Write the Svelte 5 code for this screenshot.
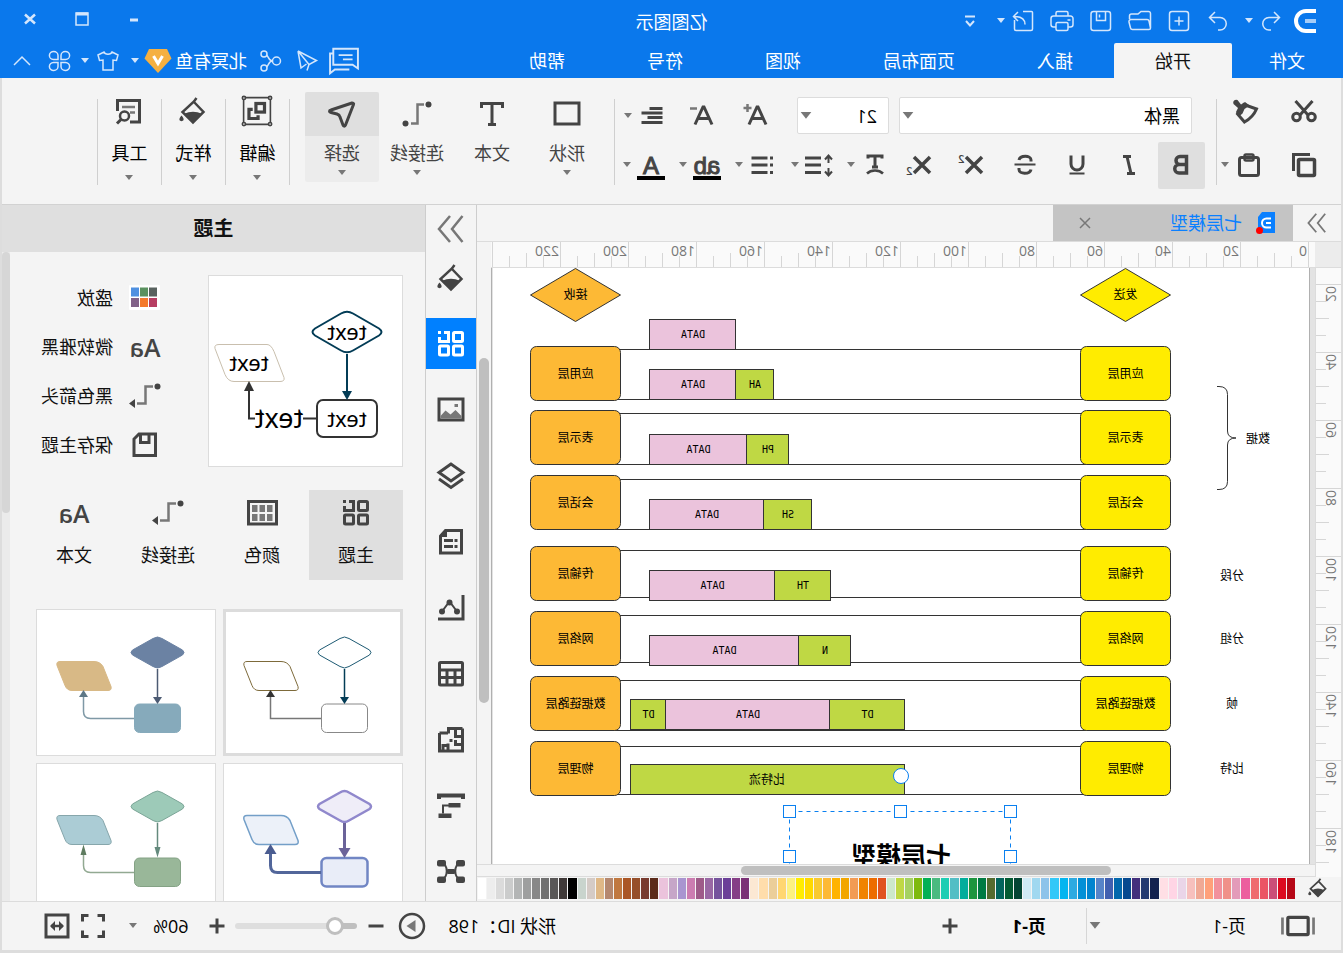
<script lang="ts">
  // Diagram editor window. The whole window is drawn flipped left to right,
  // so everything below is laid out in normal reading order and the root
  // element is mirrored once.

  let tab = $state("开始");
  let font = $state("黑体");
  let size = $state("21");
  let bold = $state(true);
  let tool = $state("选择");
  let rail = $state(1);
  let themeTab = $state("主题");
  let theme = $state(0);
  let page = $state("页-1");
  let zoom = $state(60);

  const tabs = ["开始", "插入", "页面布局", "视图", "符号", "帮助"];

  // 28x28 line icons
  const icons: Record<string, string> = {
    undo: '<path d="M11 5 5.5 10.5 11 16M5.5 10.5H16a6 6 0 0 1 0 12.5h-2"/>',
    redo: '<path d="M17 5l5.5 5.5L17 16M22.5 10.5H12a6 6 0 0 0 0 12.5h2"/>',
    create: '<rect x="4.5" y="4.5" width="19" height="19" rx="2.5"/><path d="M14 9.5v9M9.5 14h9"/>',
    folder: '<path d="M3.5 21V6.5a2 2 0 0 1 2-2H13l3 2.5h6.5a2 2 0 0 1 2 2V12M3.5 21l1.5-7a2 2 0 0 1 2-1.5h16a2 2 0 0 1 2 2.5l-1.5 6a2 2 0 0 1-2 1.5H5A1.5 1.5 0 0 1 3.5 21z"/>',
    save: '<rect x="4.5" y="4.5" width="19.5" height="19" rx="2.5"/><path d="M9.5 5v8.5h9V5M15.5 7.5v3"/>',
    print: '<path d="M8 9V6a1.5 1.5 0 0 1 1.5-1.5h9A1.5 1.5 0 0 1 20 6v3M8 20H5.5A2.5 2.5 0 0 1 3 17.5v-6A2.5 2.5 0 0 1 5.5 9h17a2.5 2.5 0 0 1 2.5 2.5v6a2.5 2.5 0 0 1-2.5 2.5H20M5.5 13h3"/><rect x="8" y="15.5" width="12" height="8" rx="1.5"/>',
    export: '<path d="M14 4.5H5.5a1 1 0 0 0-1 1V22A1.5 1.5 0 0 0 6 23.5h15a1.5 1.5 0 0 0 1.5-1.5v-9"/><path d="M12 17.5c0-6 4-8 11-8M19 5l4.5 4.5L19 14"/>',
    overflow: '<path d="M9 9.5h10" stroke-width="2"/><path d="M10 14l4 4.5 4-4.5" stroke-width="2"/>',
    minimize: '<path d="M10 15h8" stroke-width="3"/>',
    maximize: '<path d="M8 8h12v12H8z"/><path d="M8 9h12" stroke-width="3"/>',
    close: '<path d="M9 9.5l10 9M19 9.5l-10 9" stroke-width="2.5"/>',
    comment: '<path d="M24 7V2.5H1V21l5-3.5h18V7h3v18.5L22.5 22H9M6 8.5h13M6 12.5h9" stroke-width="1.8"/>',
    send: '<path d="M23 4 4.5 13.5l7.5 4 2 6M23 4 12 17.5M23 4l-3 17-5.5-4"/>',
    share: '<circle cx="8.5" cy="14" r="4"/><circle cx="21" cy="7" r="3"/><circle cx="21" cy="21" r="3"/><path d="M12.5 14c4 0 4-5 6-6M12.5 14c4 0 4 5 6 6"/>',
    shirt: '<path d="M10 5 4 8l1.5 5.5L9 13v10h10V13l3.5.5L24 8l-6-3c-1 3-7 3-8 0z"/>',
    apps: '<path d="M13 9v-.5a4.3 4 0 1 0-4.5 4H13zM16 9v-.5a4.3 4 0 1 1 4.5 4H16zM13 19v.5a4.3 4 0 1 1-4.5-4H13zM16 19v.5a4.3 4 0 1 0 4.5-4H16z"/>',
    up: '<path d="M6 18l8-8 8 8"/>',
    cut: '<g stroke-width="3"><path d="M5.5 4 18 18M22.5 4 10 18"/><circle cx="6.5" cy="20" r="3.8"/><circle cx="21.5" cy="20" r="3.8"/></g>',
    painter: '<path d="M3.5 12 16 7.5 22.5 17l-7 8C10 22 6 18 3.5 12z" stroke-width="3"/><path d="M9 9.5 15 5l4 2.5L22.5 3a3 3 0 0 1 4 4L22 11l2 4-2.5 5-4-3.5-2-4.500-3-2z" fill="currentColor" stroke="none"/>',
    copy: '<path d="M24.5 20V3.5H8" stroke-width="3"/><rect x="3.5" y="8.5" width="16" height="16" rx="1" stroke-width="3.5"/>',
    paste: '<rect x="4.5" y="6.5" width="19" height="18" rx="2" stroke-width="3"/><rect x="9.5" y="3.5" width="9" height="6" rx="1.5" stroke-width="2.5"/>',
    italic: '<path d="M12 5.5h8M8 22.5h8M16 5.5l-4 17" stroke-width="3"/>',
    underline: '<path d="M8 4.5V13a6 6 0 0 0 12 0V4.5" stroke-width="3"/><path d="M6.5 22.5h15" stroke-width="2"/>',
    strike: '<path d="M20 9c-1-5-12-5-12 0v1.5M8 18.5c1 5 12 5 12 0V17" stroke-width="3"/><path d="M3.5 13.5h21" stroke-width="2"/>',
    bold: '<path d="M8.5 5.5H15a4 4 0 0 1 0 8H8.500zM8.5 13.5H16a4.2 4.2 0 0 1 0 8.5H8.500z" stroke-width="3.5"/>',
    x: '<path d="M6 6l16 16M22 6 6 22" stroke-width="3.5"/>',
    textpath: '<path d="M7 7.5V5h14v2.500M14 5v11M11 16h6" stroke-width="3"/><path d="M6 22.5c4-4 12-4 16 0" stroke-width="2.5"/>',
    spacing: '<path d="M12 7h16M12 14h16M12 21.5h16" stroke-width="3"/><path d="M4.5 5v7M4.5 17v7M1 8.5l3.500-4L8 8.500M1 20.5l3.500 4 3.500-4" stroke-width="2"/>',
    bullets: '<path d="M9.5 7h16M9.5 14h16M9.5 21.5h16" stroke-width="3"/><path d="M4 7h3M4 14h3M4 21.5h3" stroke-width="3"/>',
    align: '<path d="M3.5 6.5h13M3.5 11h21M3.5 15.5h15M3.5 20.5h21" stroke-width="2.8"/>',
    bigger: '<path d="M5 22.5 13 5h1l8 17.5M8 16.5h11" stroke-width="3"/><path d="M23.5 2v8M19.5 6h8" stroke-width="2.5" stroke="#777"/>',
    smaller: '<path d="M5 22.5 13 5h1l8 17.5M8 16.5h11" stroke-width="3"/><path d="M20 6.5h7" stroke-width="2.5" stroke="#777"/>',
    rect: '<rect x="2" y="3" width="24" height="21" stroke-width="3"/>',
    text: '<path d="M3.5 8V3.5h21V8M14 3.5V24M10 24.5h8" stroke-width="3"/>',
    link: '<path d="M7 4.5h6.5v19H20" stroke-width="2.5" stroke="#777"/><circle cx="2.5" cy="4.5" r="3" fill="currentColor" stroke="none"/><circle cx="25.5" cy="23.5" r="3" fill="currentColor" stroke="none"/>',
    arrow: '<path d="M2.5 4.5C2 3.5 3 3 4 3l21 7c2 .5 2 2 0 2.5L19 14c-1.500.5-2.500 1-3 3l-3 8c-.5 1.500-2 1.500-2.500 0z" stroke-width="3" stroke-linejoin="round"/>',
    group: '<path d="M1.5 1.5h25v25h-25z"/><rect x="7" y="7" width="8" height="8" stroke-width="3"/><path d="M18 12.5h3.5V21H13v-3" stroke-width="3"/><g fill="#f4f4f4"><circle cx="1.8" cy="1.8" r="1.5"/><circle cx="26.2" cy="1.8" r="1.5"/><circle cx="1.8" cy="26.2" r="1.5"/><circle cx="26.2" cy="26.2" r="1.5"/></g>',
    fill: '<path d="M10.5 1 13 4.5 24.5 15 14 25.5 3.5 15l10-10.5" stroke-width="2.5"/><path d="M5 17c6-3 12-3 18 0l-9 9z" fill="currentColor" stroke="none"/><path d="M25.5 18.5c1.5 2 2.5 3 2 4.5s-3.5 1.5-4 0 .5-2.5 2-4.5z" fill="currentColor" stroke="none"/>',
    tools: '<path d="M13 25H3.5V3.5h22V14" stroke-width="3"/><path d="M8 10h13M8 15.5h5" stroke-width="2.5" stroke="#777"/><circle cx="18.5" cy="19" r="4.5" stroke-width="2.5"/><path d="M22 22.5l4 4" stroke-width="3"/>',
    collapse: '<path d="M2.5 1 13 14 2.5 27M15 1l11 13-11 13" stroke="#777" stroke-width="2.5"/>',
    grid: '<g stroke-width="3"><rect x="2.5" y="2.5" width="9" height="9" rx="1"/><rect x="2.5" y="16" width="9" height="9" rx="1"/><rect x="16.5" y="16" width="9" height="9" rx="1"/><path d="M21 2.5h-4.5v9h9V7"/></g><path d="M24 1h3v3h-3z" fill="currentColor" stroke="none"/>',
    image: '<rect x="2" y="3" width="24" height="21" stroke-width="3"/><path d="M3.5 22.5V20l6-6 5 4.5 5-4 5 5.500v2.500z" fill="#777" stroke="none"/><path d="M7 8h3.5v3H7z" fill="#777" stroke="none"/>',
    layers: '<path d="M14 2l12 8.5L14 19 2 10.500z" stroke-width="3"/><path d="M2 17l12 8.5L26 17" stroke-width="3"/>',
    doc: '<path d="M3.5 2.5h16l5 5.500v17h-21z" stroke-width="3"/><path d="M7.5 12.5h3M12 12.5h9M7.5 18.5h3M12 18.5h9" stroke-width="3"/><path d="M18 2v7h7.500z" fill="currentColor" stroke="none"/>',
    chart: '<path d="M2 1v24h25" stroke-width="3"/><path d="M8 17.5l7.500-10 7.500 10" stroke-width="2"/><g fill="currentColor" stroke="none"><circle cx="8" cy="17.5" r="3"/><circle cx="15.5" cy="8.5" r="3"/><circle cx="23" cy="17.5" r="3"/></g>',
    table: '<rect x="2.5" y="2.5" width="23" height="22.5" rx="1" stroke-width="3"/><path d="M2 10h24M2 17.5h24M10 10v15M18 10v15" stroke-width="3"/>',
    plan: '<path d="M2.5 2.5h14v5M25.5 7H17M2.5 2.5V25h23V7M2.5 10.5h7v-8M2.5 18.5h7V14M17 25v-7.5M22 25v-5.5h-5M14 13v3" stroke-width="3"/>',
    gantt: '<path d="M2 7V3.5h24V7" stroke-width="4"/><path d="M10 13.5h12v8" stroke-width="2"/><path d="M4.5 11h12v4.500h-12zM13.5 21.5h13V26h-13z" fill="currentColor" stroke="none"/>',
    mind: '<path d="M4 5.5c8 0 7 15 1 15.5M24 5.5c-8 0-7 15-1 15.5M10 13.5h8" stroke-width="2"/><g fill="currentColor" stroke="none"><rect x="0" y="2" width="9" height="6.5" rx="2"/><rect x="19" y="2" width="9" height="6.5" rx="2"/><rect x="0" y="18.5" width="9" height="6.5" rx="2"/><rect x="19" y="18.5" width="9" height="6.5" rx="2"/><rect x="10" y="11" width="8" height="5" rx="1"/></g>',
    colors: '<rect x="-1" y="1" width="31" height="25" rx="1" fill="#fff" stroke="none"/><g stroke="none"><path d="M2 3.5h8v9H2z" fill="#59625f"/><path d="M11 3.5h8v9h-8z" fill="#5a915f"/><path d="M20 3.5h8v9h-8z" fill="#4f90e0"/><path d="M2 14h8v9H2z" fill="#b73e62"/><path d="M11 14h8v9h-8z" fill="#f4792c"/><path d="M20 14h8v9h-8z" fill="#816188"/></g>',
    swatches: '<rect x="-.5" y="2.5" width="28" height="22.5" stroke-width="3"/><path d="M3.5 6H9v7H3.500zM11 6h5.500v7H11zM18.5 6H24v7h-5.500zM3.5 15H9v7H3.500zM11 15h5.500v7H11zM18.5 15H24v7h-5.500z" fill="#777" stroke="none"/>',
    linkarrow: '<path d="M6 4.5h7.5v17H22" stroke-width="2.5" stroke="#777"/><circle cx="1.5" cy="4.5" r="3" fill="currentColor" stroke="none"/><path d="M24 17l6 4.5-6 4.500z" fill="currentColor" stroke="none"/>',
    disk: '<path d="M3.5 3H20l5 5v16.500H3.500zM10 3v8.5h8.5V3" stroke-width="3"/>',
    pages: '<rect x="4.5" y="6" width="19" height="16" rx="1" stroke-width="3"/><path d="M-.5 6v16M28.5 6v16" stroke-width="2.5" stroke="#777"/>',
    plus: '<path d="M14 6.5v15M6.5 14h15" stroke-width="3"/>',
    minus: '<path d="M6.5 14h15" stroke-width="3"/>',
    play: '<circle cx="14" cy="14" r="12" stroke-width="2.5"/><path d="M10.5 8l9 6-9 6z" fill="#777" stroke="none"/>',
    full: '<path d="M3.5 9.5v-6h6M18.5 3.5h6v6M24.5 18.5v6h-6M9.5 24.5h-6v-6" stroke-width="3"/>',
    fit: '<rect x="3" y="3" width="22" height="22" stroke-width="3"/><path d="M8 14h12" stroke-width="2.5"/><path d="M12 9v10l-5-5zM16 9v10l5-5z" fill="currentColor" stroke="none"/>',
  };

  const panes = ["fill", "grid", "image", "layers", "doc", "chart", "table", "plan", "gantt", "mind"];

  const layers = [
    { name: "应用层", y: 78, top: 81, end: 131 },
    { name: "表示层", y: 142, top: 145, end: 196 },
    { name: "会话层", y: 207, top: 211, end: 261 },
    { name: "传输层", y: 278, top: 282, end: 329 },
    { name: "网络层", y: 343, top: 347, end: 394 },
    { name: "数据链路层", y: 408, top: 412, end: 462 },
    { name: "物理层", y: 473, top: 478, end: 526 },
  ];

  // packet segments: x, y, width, label, tint
  const segments: [number, number, number, string, string][] = [
    [573, 51, 86, "DATA", "pink"],
    [573, 101, 86, "DATA", "pink"],
    [535, 101, 38, "AH", "lime"],
    [562, 166, 97, "DATA", "pink"],
    [520, 166, 42, "PH", "lime"],
    [545, 231, 114, "DATA", "pink"],
    [497, 231, 48, "SH", "lime"],
    [534, 302, 125, "DATA", "pink"],
    [478, 302, 56, "TH", "lime"],
    [510, 367, 149, "DATA", "pink"],
    [458, 367, 52, "N", "lime"],
    [404, 431, 75, "DT", "lime"],
    [479, 431, 164, "DATA", "pink"],
    [643, 431, 35, "DT", "lime"],
  ];

  const units: [number, number, string][] = [
    [50, 175, "数据"],
    [76, 312, "分段"],
    [76, 375, "分组"],
    [76, 440, "帧"],
    [76, 505, "比特"],
  ];

  const handles = [[298, 543], [408, 543], [519, 543], [298, 588], [519, 588]];

  const palette = (
    "b60817 dd0a20 cb4e78 eb5565 ef6b6f ec5f9e e39bb9 f09089 f2909c ffa07a f0a995 f7c0bd ead5e8 ffd5e5 ffdfe5 " +
    "12234f 233a70 432f7c 06498f 0268ac 4160b0 5784c8 0184cf 0290d7 2daae1 03b5f0 33c8f8 8dc3ea a0d8f0 cfeaf5 " +
    "034534 025a32 02645c 556b2f 007b43 1d953e 02ad9c 53bec5 1dcdb3 4aba80 03b055 7fba0f a5d163 bfd844 cde8ca " +
    "e0521f ed6c00 f08300 f29b54 f2a600 ffb300 fdb935 f9ca30 ffd900 ffec00 fcf181 ffd671 ebce99 ffddab fce8d3 " +
    "7a3176 853e86 6b3f98 75539c 9968a4 9e5b89 cc7db1 a995d0 c6a6c8 ebc3dc 5b2b1a 783b2f 964f2a aa5626 c07840 " +
    "b5886f dfb887 d5cbc6 c9d4cd 000000 3f3938 595757 707070 888888 9e9f9f b3b5b5 cbcccc dbdbdb ededed ffffff"
  ).split(" ");

  const settings = [
    { icon: "colors", label: "盛放" },
    { icon: "", label: "微软雅黑" },
    { icon: "linkarrow", label: "黑色箭头" },
    { icon: "disk", label: "保存主题" },
  ];

  const themeTabs = [
    { icon: "grid", label: "主题" },
    { icon: "swatches", label: "颜色" },
    { icon: "linkarrow", label: "连接线" },
    { icon: "", label: "文本" },
  ];

  const themes = [
    { dia: ["#fff", "#1d5a73"], box: ["#fff", "#888"], par: ["#fff", "#7d6a3a"], down: "#033c56", turn: "#777", tip: "#333", w: 1.5, round: false },
    { dia: ["#6b82a3", "#6b82a3"], box: ["#86aabb", "#86aabb"], par: ["#d8b986", "#d8b986"], down: "#4c5b73", turn: "#7f99a6", tip: "#5d7786", w: 1.5, round: true },
    { dia: ["#efedf8", "#9088cc"], box: ["#e9edf8", "#7186c4"], par: ["#ecf1f9", "#739fc8"], down: "#6b6399", turn: "#52669a", tip: "#4a5c90", w: 3, round: true },
    { dia: ["#9dcab8", "#7ba597"], box: ["#99b799", "#84a285"], par: ["#abccd5", "#86a6ab"], down: "#648a7d", turn: "#92a992", tip: "#5f7c60", w: 1.5, round: true },
  ];
</script>

{#snippet icon(name: string, px = 28)}
  <svg class="icon" width={px} height={px} viewBox="0 0 28 28" aria-hidden="true">{@html icons[name]}</svg>
{/snippet}

{#snippet caret()}
  <svg class="caret" width="12" height="6" viewBox="0 0 12 6" aria-hidden="true"><path d="M2 0h8L6 5z" /></svg>
{/snippet}

{#snippet split(name: string, label: string)}
  <button class="split" aria-label={label}>{@render icon(name)}{@render caret()}</button>
{/snippet}

{#snippet big(name: string, label: string, more = true)}
  <button class="big" class:active={tool === label} onclick={() => (tool = label)}>
    <span class="big-icon">{@render icon(name)}</span>
    <span>{label}</span>
    {#if more}{@render caret()}{/if}
  </button>
{/snippet}

{#snippet menu(name: string, label: string)}
  <button class="menu">
    <span class="menu-icon">{@render icon(name, label === "编辑" ? 30 : 28)}</span>
    <span class="menu-label">{label}</span>
    {@render caret()}
  </button>
{/snippet}

<main class="app">
  <header class="top">
    <div class="titlebar">
      <div class="quick">
        <svg class="logo" width="28" height="28" viewBox="0 0 28 28" aria-hidden="true">
          <path d="M3 4h10a10 10 0 0 1 0 20H3" /><path class="bar" d="M3 14h11" />
        </svg>
        <button aria-label="撤销">{@render icon("undo")}</button>
        <button class="slim" aria-label="撤销记录">{@render caret()}</button>
        <button aria-label="重做">{@render icon("redo")}</button>
        <button aria-label="新建">{@render icon("create")}</button>
        <button aria-label="打开">{@render icon("folder")}</button>
        <button aria-label="保存">{@render icon("save")}</button>
        <button aria-label="打印">{@render icon("print")}</button>
        <button aria-label="导出">{@render icon("export")}</button>
        <button class="slim" aria-label="导出选项">{@render caret()}</button>
        <button aria-label="更多">{@render icon("overflow")}</button>
      </div>
      <h1>亿图图示</h1>
      <div class="window">
        <button aria-label="最小化">{@render icon("minimize")}</button>
        <button aria-label="最大化">{@render icon("maximize")}</button>
        <button aria-label="关闭">{@render icon("close")}</button>
      </div>
    </div>
    <div class="tabbar">
      <button class="tab file">文件</button>
      {#each tabs as t}
        <button class="tab" class:active={tab === t} onclick={() => (tab = t)}>{t}</button>
      {/each}
      <div class="account">
        <button aria-label="评论">{@render icon("comment", 30)}</button>
        <button aria-label="发送">{@render icon("send")}</button>
        <button aria-label="分享">{@render icon("share")}</button>
        <button class="user">北冥有鱼
          <svg width="28" height="26" viewBox="0 0 28 26" aria-hidden="true">
            <path d="M5 1h18l4.5 9.5L14 25 .5 10.500z" fill="#f5b041" /><path d="M9.5 8l4.5 7.5L18.5 8" fill="none" stroke="#fff" stroke-width="3" />
          </svg>
          {@render caret()}
        </button>
        <button class="pair" aria-label="皮肤">{@render icon("shirt")}{@render caret()}</button>
        <button aria-label="应用">{@render icon("apps")}</button>
        <button aria-label="收起">{@render icon("up")}</button>
      </div>
    </div>
  </header>

  <div class="frame">
    <section class="ribbon">
      <div class="clip">
        <button aria-label="剪切">{@render icon("cut")}</button>
        <button aria-label="格式刷">{@render icon("painter")}</button>
        <button aria-label="复制">{@render icon("copy")}</button>
        <button class="paste" aria-label="粘贴">{@render icon("paste")}{@render caret()}</button>
      </div>
      <i class="sep"></i>
      <div class="fonts">
        <div class="row first">
          <label class="pick wide">
            <select bind:value={font} aria-label="字体"><option>黑体</option><option>宋体</option></select>
            {@render caret()}
          </label>
          <label class="pick narrow">
            <select bind:value={size} aria-label="字号"><option>21</option><option>24</option></select>
            {@render caret()}
          </label>
          <div class="grow">
            <button aria-label="增大字号">{@render icon("bigger")}</button>
            <button aria-label="减小字号">{@render icon("smaller")}</button>
          </div>
          {@render split("align", "对齐")}
        </div>
        <div class="row">
          <div class="toggles">
            <button class:active={bold} aria-label="加粗" onclick={() => (bold = !bold)}>{@render icon("bold")}</button>
            <button aria-label="斜体">{@render icon("italic")}</button>
            <button aria-label="下划线">{@render icon("underline")}</button>
            <button aria-label="删除线">{@render icon("strike")}</button>
            <button class="script" aria-label="上标">{@render icon("x")}<sup>2</sup></button>
            <button class="script" aria-label="下标">{@render icon("x")}<sub>2</sub></button>
          </div>
          <div class="splits">
            {@render split("textpath", "文本路径")}
            {@render split("spacing", "行距")}
            {@render split("bullets", "项目符号")}
            <button class="split"><span class="ink">ab</span>{@render caret()}</button>
            <button class="split"><span class="ink">A</span>{@render caret()}</button>
          </div>
        </div>
      </div>
      <i class="sep"></i>
      <div class="bigs">
        {@render big("rect", "形状")}
        {@render big("text", "文本", false)}
        {@render big("link", "连接线")}
        {@render big("arrow", "选择")}
      </div>
      <i class="sep"></i>
      {@render menu("group", "编辑")}
      <i class="sep"></i>
      {@render menu("fill", "样式")}
      <i class="sep"></i>
      {@render menu("tools", "工具")}
      <i class="sep"></i>
    </section>

    <div class="body">
      <section class="document">
        <div class="doctabs">
          <button class="expand" aria-label="展开">{@render icon("collapse", 20)}</button>
          <div class="doctab">
            <svg width="20" height="22" viewBox="0 0 20 22" aria-hidden="true">
              <path d="M1 0h13l4 5v16H1z" fill="#0a80ff" /><path d="M5 6.5h4.5a4.5 4.5 0 0 1 0 9H5M5 11h5" fill="none" stroke="#fff" stroke-width="2" /><circle cx="16.5" cy="18.5" r="3.5" fill="#f00" />
            </svg>
            <span>七层模型</span>
            <button aria-label="关闭文档">
              <svg width="12" height="12" viewBox="0 0 12 12" aria-hidden="true"><path d="M1 1l10 10M11 1 1 11" fill="none" stroke="#777" stroke-width="1.5" /></svg>
            </button>
          </div>
        </div>

        <div class="workspace">
          <div class="corner"></div>
          <svg class="ruler across" aria-hidden="true">
            {#each Array(60) as _, i}
              <line x1={6.5 + i * 17} x2={6.5 + i * 17} y1={i % 4 === 0 ? 0 : i % 2 === 0 ? 11 : 14} y2="26" />
            {/each}
            {#each Array(12) as _, i}
              <text x={8 + i * 68} y="14">{i * 20}</text>
            {/each}
          </svg>
          <svg class="ruler down" aria-hidden="true">
            {#each Array(60) as _, i}
              <line x1={i % 4 === 0 ? 0 : i % 2 === 0 ? 12 : 15} x2="26" y1={16.5 + i * 17} y2={16.5 + i * 17} />
            {/each}
            {#each Array(9) as _, i}
              <text transform="translate(15 {18 + i * 68}) rotate(-90)" text-anchor="end">{20 + i * 20}</text>
            {/each}
          </svg>
          <div class="canvas">
            <svg width="817" height="620" viewBox="-1 0 816 620" role="img" aria-label="七层模型">
              {#each layers as layer}
                <rect class="lane" x="182" y={layer.top + 0.5} width="550" height={layer.end - layer.top} />
              {/each}
              {#each [[182.5, "yellow", "发送"], [732.5, "orange", "接收"]] as [cx, tint, label]}
                <path class={tint} d="M{cx} .5l45 26.500-45 26.500-45-26.500z" />
                <text x={cx} y="31">{label}</text>
                {#each layers as layer}
                  <rect class={tint} x={Number(cx) - 45} y={layer.y + 0.5} width="90" height="54" rx="6" />
                  <text x={cx} y={layer.y + 32}>{layer.name}</text>
                {/each}
              {/each}
              {#each segments as [x, y, w, label, tint]}
                <rect class={tint} x={x - 0.5} y={y + 0.5} width={w} height="30" />
                <text class="mono" x={x + w / 2 - 1} y={y + 19}>{label}</text>
              {/each}
              <rect class="lime" x="403.5" y="496.5" width="274" height="30" />
              <text x="541" y="516">比特流</text>
              {#each units as [x, y, label]}
                <text {x} {y}>{label}</text>
              {/each}
              <path class="brace" d="M91 118.5h-2q-8.5 0-8.5 8V163q0 7-8.5 7 8.500 0 8.500 7v36.500q0 8 8.500 8h2" />
              <path class="select" d="M297.5 543.5h221M297.5 543.5V600M518.5 543.5V600" />
              <text class="heading" x="407" y="597">七层模型</text>
              {#each handles as [x, y]}
                <rect class="handle" x={x - 6.5} y={y - 5.5} width="12" height="12" />
              {/each}
              <circle class="handle" cx="407" cy="508" r="7.5" />
            </svg>
          </div>
          <div class="vscroll"><i></i></div>
          <div class="hscroll"><i></i></div>
        </div>

        <div class="palette">
          <button aria-label="填充">{@render icon("fill", 20)}</button>
          <div class="swatches">
            {#each palette as color}
              <button aria-label={"#" + color} style:background={"#" + color}></button>
            {/each}
          </div>
        </div>
      </section>

      <nav class="rail">
        <button class="fold" aria-label="折叠">{@render icon("collapse")}</button>
        {#each panes as pane, i}
          <button class:active={rail === i} aria-label={pane} onclick={() => (rail = i)}>{@render icon(pane)}</button>
        {/each}
      </nav>

      <aside class="panel">
        <h2>主题</h2>
        <div class="panel-body">
          <div class="panel-content">
            <div class="current">
              <svg class="preview" width="195" height="192" viewBox="0 0 193 190" role="img" aria-label="当前主题">
                <g fill="#fff" stroke-width="2">
                  <path stroke="#033c56" d="M49 37.5q6-3.5 12 0l26 15q5 3.5 0 7l-26 15q-6 3.5-12 0l-26-15q-5-3.5 0-7z" />
                  <path stroke="#033c56" d="M55 78v38" />
                  <rect stroke="#333" x="25" y="124" width="60" height="37" rx="6" />
                  <path stroke="#c9bfae" stroke-width="1" d="M137 68.5h46q5 0 4 4l-10 26q-3 7-9 7h-46q-5 0-4-4l10-26q3-7 7-7z" />
                  <path stroke="#333" fill="none" d="M85 142.5h14M147 142.5h6V112" />
                </g>
                <path fill="#033c56" d="M50 115h10l-5 9z" />
                <path fill="#333" d="M148 115h10l-5-10z" />
                <text x="55" y="64">text</text>
                <text x="153" y="95">text</text>
                <text x="55" y="151">text</text>
                <text class="large" x="123" y="152">text</text>
              </svg>
              <div class="settings">
                {#each settings as row}
                  <button>
                    <span class="setting-icon">{#if row.icon}{@render icon(row.icon)}{:else}<b>Aa</b>{/if}</span>
                    {row.label}
                  </button>
                {/each}
              </div>
            </div>
            <div class="theme-tabs">
              {#each themeTabs as t}
                <button class:active={themeTab === t.label} onclick={() => (themeTab = t.label)}>
                  <span class="setting-icon">{#if t.icon}{@render icon(t.icon)}{:else}<b>Aa</b>{/if}</span>
                  {t.label}
                </button>
              {/each}
            </div>
            <div class="cards">
              {#each themes as t, i}
                <button class="card" class:active={theme === i} aria-label={"主题 " + (i + 1)} onclick={() => (theme = i)}>
                  <svg width="178" height="145" viewBox="0 0 178 145" aria-hidden="true">
                    <g stroke-width={t.w === 3 ? 2.5 : 1}>
                      <path fill={t.dia[0]} stroke={t.dia[1]} d="M53 28.5q4.500-3 9 0L82.5 40q3 2.500 0 5L62 56.5q-4.500 3-9 0L32.5 45q-3-2.500 0-5z" />
                      <path fill={t.par[0]} stroke={t.par[1]} stroke-width={t.w === 3 ? 1.5 : 1} d="M121 51.5h34q4 0 3 4l-8 20q-2 5-7 5h-36q-4 0-3-4l8-20q3-5 9-5z" />
                      <rect fill={t.box[0]} stroke={t.box[1]} x="34.5" y="94" width="46" height="28.5" rx="5" />
                    </g>
                    <path fill="none" stroke={t.down} stroke-width={t.w} d="M57.5 59v30" />
                    <path fill="none" stroke={t.turn} stroke-width={t.w} d={t.round ? "M81 108.5h43.500q7 0 7-7V86" : "M81 108.5h50.500V86"} />
                    <path fill={t.down} d={i === 3 ? "M54.5 83h6l-3 10.500z" : t.w === 3 ? "M51.5 84h12l-6 10z" : "M53 87h9l-4.500 7z"} />
                    <path fill={t.tip} d={i === 3 ? "M128.5 91h6l-3-10.500z" : t.w === 3 ? "M125.5 90h12l-6-10z" : "M127 87h9l-4.500-7z"} />
                  </svg>
                </button>
              {/each}
            </div>
          </div>
          <div class="panel-scroll"><i></i></div>
        </div>
      </aside>
    </div>

    <footer class="status">
      <button aria-label="页面视图">{@render icon("pages", 30)}</button>
      <label class="page">
        <select bind:value={page} aria-label="页面"><option>页-1</option></select>
        {@render caret()}
      </label>
      <i class="line"></i>
      <button class="sheet">页-1</button>
      <button aria-label="新增页面">{@render icon("plus")}</button>
      <span class="shape-id">形状 ID：198</span>
      <button aria-label="演示">{@render icon("play")}</button>
      <button class="out" aria-label="缩小" onclick={() => (zoom -= 10)}>{@render icon("minus")}</button>
      <input type="range" min="10" max="400" aria-label="缩放" bind:value={zoom} />
      <button class="in" aria-label="放大" onclick={() => (zoom += 10)}>{@render icon("plus")}</button>
      <button class="zoom">{zoom}% {@render caret()}</button>
      <button aria-label="全屏">{@render icon("full")}</button>
      <button aria-label="适合宽度">{@render icon("fit")}</button>
    </footer>
  </div>
</main>

<style>
  :global(body) {
    background: #f4f4f4;
  }

  .app {
    display: flex;
    flex-direction: column;
    height: 100vh;
    overflow: hidden;
    transform: scaleX(-1);
    font-family: "Open Sans", "Noto Sans CJK SC", sans-serif;
    font-size: 18px;
    line-height: 24px;
    color: #111;
  }

  .app * {
    box-sizing: border-box;
  }

  button {
    display: flex;
    align-items: center;
    justify-content: center;
    padding: 0;
    border: 0;
    background: none;
    color: inherit;
    font: inherit;
    white-space: nowrap;
    cursor: pointer;
  }

  i {
    display: block;
  }

  .icon {
    display: block;
    flex-shrink: 0;
    overflow: visible;
    fill: none;
    stroke: currentColor;
    stroke-width: 1.5;
  }

  .caret {
    display: block;
    flex-shrink: 0;
    fill: #777;
  }

  /* title and tabs */
  .top {
    flex-shrink: 0;
    height: 78px;
    background: #0a78ec;
    color: #d4e6fc;
  }

  .top .caret {
    fill: #d4e6fc;
  }

  .titlebar {
    display: grid;
    grid-template-columns: 1fr auto 1fr;
    align-items: center;
    height: 43px;
  }

  .titlebar h1 {
    margin: 0;
    font-size: 18px;
    font-weight: 400;
    color: #fff;
  }

  .quick {
    display: flex;
    align-items: center;
    padding: 0 0 2px 24px;
  }

  .quick button {
    width: 39px;
  }

  .quick .slim {
    width: 12px;
    margin: 0 5px 0 -3px;
  }

  .logo {
    fill: none;
    stroke: #fff;
    stroke-width: 4;
  }

  .logo .bar {
    stroke: #a7cdf7;
  }

  .window {
    display: flex;
    justify-content: flex-end;
    padding: 0 4px 6px 0;
  }

  .window button {
    width: 52px;
  }

  .tabbar {
    display: flex;
    height: 35px;
  }

  .tab {
    padding: 0 41px;
    border-radius: 2px 2px 0 0;
    color: #fff;
  }

  .file {
    padding: 0 37px 0 38px;
  }

  .tab.active {
    background: #f4f4f4;
    color: #111;
  }

  .account {
    display: flex;
    align-items: center;
    margin-left: auto;
    padding-right: 8px;
    gap: 8px;
  }

  .user {
    gap: 3px;
    margin: 0 -1px 0 2px;
    color: #fff;
  }

  .pair {
    gap: 3px;
    margin-right: -3px;
  }

  .pair + button {
    margin-right: 2px;
  }

  .frame {
    display: flex;
    flex: 1;
    flex-direction: column;
    min-height: 0;
    border: solid #ddd;
    border-width: 0 2px 3px;
    background: #f4f4f4;
  }

  /* ribbon */
  .ribbon {
    display: flex;
    flex-shrink: 0;
    height: 127px;
    padding: 10px 0 0 14px;
    border-bottom: 1px solid #d2d2d2;
    color: #444;
  }

  .sep {
    width: 1px;
    height: 86px;
    margin-top: 11px;
    background: #cfcfcf;
  }

  .clip {
    display: grid;
    grid-template-columns: 46px 54px;
    grid-template-rows: 46px 46px;
    gap: 8px;
    width: 110px;
  }

  .paste {
    justify-content: flex-end;
    gap: 4px;
  }

  .fonts {
    display: flex;
    flex-direction: column;
    gap: 8px;
    padding: 0 6px 0 11px;
  }

  .row {
    display: flex;
    align-items: center;
    gap: 9px;
    height: 46px;
  }

  .first {
    align-items: flex-end;
    gap: 10px;
    padding-left: 13px;
  }

  .first .split {
    height: 37px;
  }

  .pick {
    display: flex;
    align-items: center;
    height: 37px;
    border: 1px solid #dcdcdc;
    border-radius: 2px;
    background: #fff;
  }

  .wide {
    width: 293px;
  }

  .narrow {
    width: 92px;
  }

  select {
    flex: 1;
    width: 0;
    padding: 0 0 0 11px;
    border: 0;
    appearance: none;
    background: none;
    color: #000;
    font: inherit;
  }

  .pick .caret,
  .page .caret {
    width: 16px;
    height: 8px;
  }

  .grow {
    display: flex;
    padding-left: 3px;
  }

  .grow button {
    width: 54px;
    height: 37px;
  }

  .toggles {
    display: flex;
    gap: 5px;
  }

  .toggles button {
    width: 47px;
    height: 47px;
  }

  .toggles .active {
    border-radius: 2px;
    background: #dfdfdf;
  }

  .script sup,
  .script sub {
    width: 6px;
    margin-left: -4px;
    font-size: 11px;
    font-weight: 600;
    line-height: 12px;
  }

  .script sup {
    margin-bottom: 12px;
  }

  .script sub {
    margin-top: 12px;
  }

  .splits {
    display: flex;
    gap: 12px;
  }

  .split {
    gap: 4px;
    width: 44px;
  }

  .ink {
    width: 28px;
    padding-top: 5px;
    border-bottom: 4px solid #000;
    font-family: "Liberation Sans", sans-serif;
    font-size: 24px;
    line-height: 21px;
    -webkit-text-stroke: 1px #444;
  }

  .bigs {
    display: flex;
    gap: 1px;
    padding: 4px 15px 0 10px;
  }

  .big {
    flex-direction: column;
    justify-content: flex-start;
    width: 74px;
    height: 90px;
    border-radius: 2px;
    overflow: hidden;
  }

  .big-icon {
    display: grid;
    place-items: center;
    width: 100%;
    height: 44px;
    margin-bottom: 5px;
  }

  .big .caret {
    margin-top: 5px;
  }

  .big.active {
    background: #ececec;
  }

  .big.active .big-icon {
    background: #dfdfdf;
  }

  .menu {
    flex-direction: column;
    justify-content: flex-start;
    width: 63px;
    height: 100px;
  }

  .menu-icon {
    display: grid;
    place-items: center;
    height: 45px;
    margin-bottom: 8px;
  }

  .menu-label {
    color: #000;
  }

  .menu .caret {
    margin-top: 10px;
  }

  /* document */
  .body {
    display: flex;
    flex: 1;
    min-height: 0;
  }

  .document {
    display: flex;
    flex: 1;
    flex-direction: column;
    min-width: 0;
  }

  .doctabs {
    display: flex;
    flex-shrink: 0;
    height: 36px;
  }

  .expand {
    width: 48px;
  }

  .doctab {
    display: flex;
    align-items: center;
    gap: 14px;
    width: 240px;
    padding: 0 26px 0 17px;
    background: #c4c4c4;
    color: #0a80ff;
  }

  .doctab button {
    margin-left: auto;
  }

  .workspace {
    display: grid;
    flex: 1;
    grid-template-columns: 26px 1fr 14px;
    grid-template-rows: 26px 1fr 13px;
    min-height: 0;
    border-top: 1px solid #dcdcdc;
  }

  .corner {
    background: #ececec;
    border-bottom: 1px solid #dcdcdc;
  }

  .ruler {
    width: 100%;
    height: 100%;
    min-height: 0;
    overflow: hidden;
    background: #fafafa;
    font-size: 14px;
  }

  .across {
    border-bottom: 1px solid #dcdcdc;
  }

  .down {
    grid-row: 2 / 4;
    border-right: 1px solid #dcdcdc;
  }

  .ruler line {
    stroke: #d6d6d6;
  }

  .ruler text {
    fill: #777;
  }

  .canvas {
    min-width: 0;
    min-height: 0;
    overflow: hidden;
    padding-left: 5px;
    border-right: 1px solid #b0b0b0;
    background: #e3e3e3;
  }

  .canvas svg {
    display: block;
    border-left: 1px solid #b0b0b0;
    background: #fff;
    font-size: 12px;
    text-anchor: middle;
  }

  .canvas rect,
  .canvas path {
    stroke: #333;
  }

  .lane,
  .brace {
    fill: none;
  }

  .yellow {
    fill: #ffec00;
  }

  .orange {
    fill: #fdb935;
  }

  .pink {
    fill: #ebc3dc;
  }

  .lime {
    fill: #bfd844;
  }

  .mono {
    font-family: "DejaVu Sans Mono", monospace;
    font-size: 10px;
  }

  .heading {
    font-size: 25px;
    font-weight: 700;
  }

  .canvas .select {
    fill: none;
    stroke: #0a80f0;
    stroke-dasharray: 4 4;
  }

  .canvas .handle {
    fill: #fff;
    stroke: #0a80f0;
  }

  .vscroll {
    grid-column: 3;
    grid-row: 1 / 3;
    padding: 116px 2px 0;
  }

  .vscroll i {
    height: 345px;
    border-radius: 5px;
    background: #bfbfbf;
  }

  .hscroll {
    grid-column: 2 / 4;
    grid-row: 3;
    padding: 1px 0 0 204px;
    border: solid #dcdcdc;
    border-width: 1px 0;
  }

  .hscroll i {
    width: 370px;
    height: 9px;
    border-radius: 5px;
    background: #bfbfbf;
  }

  .palette {
    display: flex;
    flex-shrink: 0;
    align-items: center;
    height: 24px;
    padding-bottom: 2px;
    color: #444;
  }

  .palette > button {
    width: 46px;
  }

  .swatches {
    display: flex;
    flex: 1;
    gap: 1px;
  }

  .swatches button {
    flex: 1;
    height: 21px;
  }

  /* icon rail */
  .rail {
    display: flex;
    flex-direction: column;
    gap: 15px;
    width: 52px;
    overflow: hidden;
    border: solid #cdcdcd;
    border-width: 0 1px;
    color: #444;
  }

  .rail button {
    flex-shrink: 0;
    height: 51px;
  }

  .rail .fold {
    height: 47px;
    margin-bottom: -15px;
  }

  .rail .active {
    background: #0080ff;
    color: #fff;
  }

  /* theme panel */
  .panel {
    display: flex;
    flex-direction: column;
    width: 423px;
  }

  .panel h2 {
    flex-shrink: 0;
    margin: 0;
    background: #dfdfdf;
    font-size: 20px;
    line-height: 47px;
    text-align: center;
  }

  .panel-body {
    display: flex;
    flex: 1;
    min-height: 0;
  }

  .panel-content {
    flex: 1;
    overflow: hidden;
    padding: 23px 0 0 22px;
  }

  .panel-scroll {
    width: 8px;
    background: #ebebeb;
  }

  .panel-scroll i {
    height: 261px;
    border-radius: 4px;
    background: #d6d6d6;
  }

  .current {
    display: flex;
    gap: 45px;
    height: 192px;
  }

  .preview {
    flex-shrink: 0;
    border: 1px solid #dcdcdc;
    background: #fff;
    font-family: "Noto Sans", sans-serif;
    font-size: 22px;
    text-anchor: middle;
  }

  .preview .large {
    font-size: 27px;
  }

  .settings {
    margin-top: -2px;
  }

  .settings button {
    gap: 14px;
    height: 49px;
  }

  .setting-icon {
    display: grid;
    place-items: center;
    width: 36px;
    height: 28px;
    color: #444;
  }

  .setting-icon b {
    font-size: 25px;
    font-weight: 600;
  }

  .theme-tabs {
    display: flex;
    margin-top: 23px;
  }

  .theme-tabs button {
    flex-direction: column;
    gap: 16px;
    width: 94px;
    height: 90px;
    padding-bottom: 4px;
  }

  .theme-tabs .active {
    background: #dfdfdf;
  }

  .cards {
    display: grid;
    grid-template-columns: 180px 180px;
    gap: 7px;
    margin-top: 29px;
  }

  .card {
    height: 147px;
    border: 1px solid #dcdcdc;
    background: #fff;
  }

  .card.active {
    box-shadow: inset 0 0 0 2px #dcdcdc;
  }

  /* status bar */
  .status {
    display: flex;
    flex-shrink: 0;
    align-items: center;
    height: 49px;
    padding: 0 41px 0 28px;
    border-top: 1px solid #dcdcdc;
    color: #444;
  }

  .page {
    display: flex;
    align-items: center;
    width: 170px;
    margin-left: 26px;
  }

  .status select,
  .shape-id,
  .zoom,
  .sheet {
    color: #000;
  }

  .line {
    width: 1px;
    height: 36px;
    background: #d6d6d6;
  }

  .sheet {
    margin: 0 48px 0 40px;
    font-weight: 700;
  }

  .shape-id {
    margin: 0 22px 0 auto;
  }

  .out {
    margin: 0 5px 0 8px;
  }

  .in {
    margin: 0 15px 0 4px;
  }

  input {
    width: 122px;
    height: 18px;
    margin: 0;
    appearance: none;
    background: none;
  }

  input::-webkit-slider-runnable-track {
    height: 6px;
    border-radius: 3px;
    background: linear-gradient(to right, #bfbfbf 21px, #dedede 21px);
  }

  input::-webkit-slider-thumb {
    appearance: none;
    width: 18px;
    height: 18px;
    margin-top: -6px;
    border: 3px solid #bfbfbf;
    border-radius: 50%;
    background: #fff;
  }

  .zoom {
    gap: 14px;
    margin-right: 20px;
  }

  .zoom + button {
    margin-right: 8px;
  }
</style>
